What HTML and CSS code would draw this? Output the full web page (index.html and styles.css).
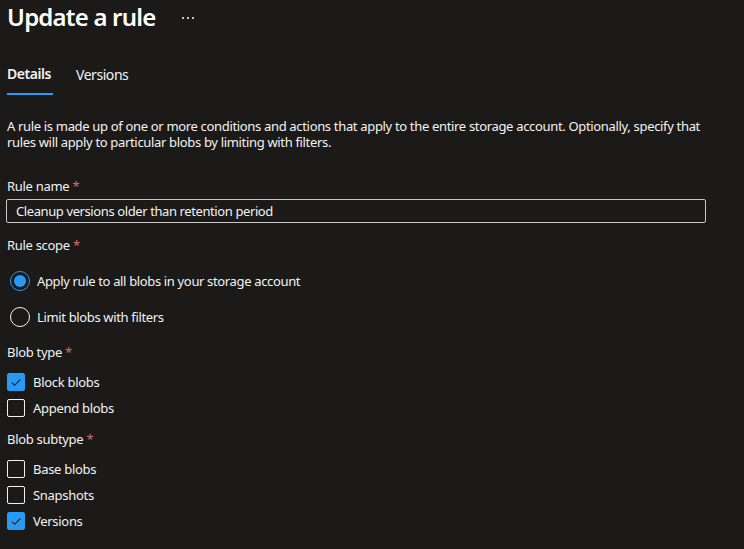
FILE: index.html
```html
<!DOCTYPE html>
<html>
<head>
<meta charset="utf-8">
<link rel="stylesheet" href="styles.css">
</head>
<body>
<div class="page">
  <header class="head">
    <h1 class="title">Update a rule</h1>
    <span class="more"><i></i><i></i><i></i></span>
  </header>
  <nav class="tabs">
    <span class="tab active">Details</span>
    <span class="tab">Versions</span>
  </nav>
  <p class="desc">A rule is made up of one or more conditions and actions that apply to the entire storage account. Optionally, specify that rules will apply to particular blobs by limiting with filters.</p>

  <div class="field name-field">
    <div class="label">Rule name <span class="req">*</span></div>
    <div class="input">Cleanup versions older than retention period</div>
  </div>

  <div class="field scope-field">
    <div class="label">Rule scope <span class="req">*</span></div>
    <div class="radios">
      <div class="radio-row"><span class="radio checked"></span><span>Apply rule to all blobs in your storage account</span></div>
      <div class="radio-row"><span class="radio"></span><span>Limit blobs with filters</span></div>
    </div>
  </div>

  <div class="field type-field">
    <div class="label">Blob type <span class="req">*</span></div>
    <div class="checks">
      <div class="check-row"><span class="box checked"><svg viewBox="0 0 18 18" width="18" height="18"><path d="M4.8 9.6 L7.6 12.3 L13.4 6.3" fill="none" stroke="#1b1a19" stroke-width="1.1"/></svg></span><span>Block blobs</span></div>
      <div class="check-row"><span class="box"></span><span>Append blobs</span></div>
    </div>
  </div>

  <div class="field subtype-field">
    <div class="label">Blob subtype <span class="req">*</span></div>
    <div class="checks">
      <div class="check-row"><span class="box"></span><span>Base blobs</span></div>
      <div class="check-row"><span class="box"></span><span>Snapshots</span></div>
      <div class="check-row"><span class="box checked"><svg viewBox="0 0 18 18" width="18" height="18"><path d="M4.8 9.6 L7.6 12.3 L13.4 6.3" fill="none" stroke="#1b1a19" stroke-width="1.1"/></svg></span><span>Versions</span></div>
    </div>
  </div>
</div>
</body>
</html>
```

FILE: styles.css
```css
* { box-sizing: border-box; }
html, body {
  margin: 0;
  background: #1b1a19;
}
body {
  font-family: "Noto Sans", "Open Sans", sans-serif;
  color: #f3f2f1;
  font-size: 13px;
  letter-spacing: -0.3px;
  width: 744px;
  height: 549px;
  overflow: hidden;
}
.page {
  padding: 0 7px;
}
.head {
  display: flex;
  align-items: center;
  height: 33px;
}
.title {
  margin: 0;
  font-size: 24px;
  font-weight: 600;
  letter-spacing: -0.8px;
  color: #ffffff;
  line-height: 32px;
}
.more {
  margin-left: 27px;
  display: flex;
  gap: 3px;
  margin-top: 2px;
}
.more i {
  width: 2px;
  height: 2px;
  background: #c8c6c4;
  display: block;
}
.tabs {
  display: flex;
  gap: 23px;
  margin-top: 26px;
  height: 36px;
}
.tab {
  font-size: 14px;
  line-height: 32px;
  color: #f3f2f1;
  letter-spacing: -0.45px;
}
.tab.active {
  font-weight: 600;
  border-bottom: 2px solid #2899f5;
  margin-top: -1px;
  padding-right: 2px;
}
.desc {
  margin: 23px 0 0;
  line-height: 16px;
  width: 710px;
  letter-spacing: -0.33px;
}
.label {
  font-weight: 400;
  line-height: 20px;
}
.req { color: #d86b6e; }
.name-field { margin-top: 26px; }
.scope-field { margin-top: 12px; }
.type-field { margin-top: 15px; }
.subtype-field { margin-top: 12px; }
.input {
  margin-top: 3px;
  width: 700px;
  margin-left: -1px;
  height: 24px;
  border: 1px solid #c8c6c4;
  border-radius: 2px;
  background: #1b1a19;
  padding: 0 9px;
  line-height: 22px;
  letter-spacing: -0.4px;
}
.radios {
  display: flex;
  flex-direction: column;
  gap: 16px;
  margin-top: 16px;
}
.radio-row {
  display: flex;
  align-items: center;
  gap: 7px;
  height: 20px;
  padding-left: 3px;
  letter-spacing: -0.35px;
}
.radio {
  width: 20px;
  height: 20px;
  border: 1px solid #f3f2f1;
  border-radius: 50%;
  display: flex;
  align-items: center;
  justify-content: center;
  flex: none;
}
.radio.checked { border-color: #2899f5; }
.radio.checked::after {
  content: "";
  width: 12px;
  height: 12px;
  border-radius: 50%;
  background: #2899f5;
}
.checks {
  display: flex;
  flex-direction: column;
  gap: 8px;
  margin-top: 11px;
}
.subtype-field .checks { margin-top: 11px; }
.check-row {
  display: flex;
  align-items: center;
  gap: 8px;
  height: 18px;
}
.box {
  width: 18px;
  height: 18px;
  border: 1px solid #f3f2f1;
  border-radius: 2px;
  flex: none;
  display: flex;
}
.box.checked {
  background: #2899f5;
  border-color: #2899f5;
}
.box svg { margin: -1px; }
```
